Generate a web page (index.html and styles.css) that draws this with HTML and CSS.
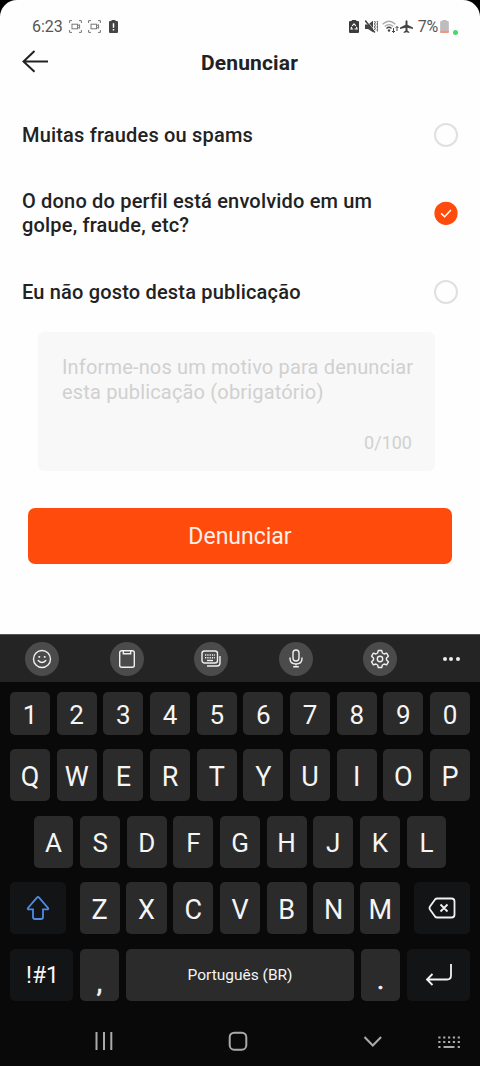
FILE: index.html
```html
<!DOCTYPE html>
<html lang="pt-BR">
<head>
<meta charset="utf-8">
<title>Denunciar</title>
<link rel="stylesheet" href="styles.css">
</head>
<body>
<div class="phone">
  <main class="sheet">
    <div class="status">
      <div class="status-left">
        <span class="clock">6:23</span>
        <svg class="cast" width="13" height="13" viewBox="0 0 13 13"><path d="M.6 3V.6H3M10 .6h2.400V3M.6 10v2.400H3M10 12.400h2.400V10"/><rect x="3" y="4.200" width="5.600" height="4.600"/><path d="M8.600 5.700l2-1v3.600l-2-1"/></svg>
        <svg class="cast" width="13" height="13" viewBox="0 0 13 13"><path d="M.6 3V.6H3M10 .6h2.400V3M.6 10v2.400H3M10 12.400h2.400V10"/><rect x="3" y="4.200" width="5.600" height="4.600"/><path d="M8.600 5.700l2-1v3.600l-2-1"/></svg>
        <svg class="alert" width="9" height="13" viewBox="0 0 9 13"><path d="M2.500 0h4v1H8q1 0 1 1v10q0 1-1 1H1q-1 0-1-1V2q0-1 1-1h1.500z" fill="#444"/><path d="M4.500 3.200v4.600M4.500 9v1.600" stroke="#fff" stroke-width="1.500"/></svg>
      </div>
      <div class="status-right">
        <svg width="10" height="13" viewBox="0 0 9 13" preserveAspectRatio="none"><path d="M2.500 0h4v1H8q1 0 1 1v10q0 1-1 1H1q-1 0-1-1V2q0-1 1-1h1.500z" fill="#3c3c3c"/><path d="M2.800 6L4.500 3.800 6.200 6M6.700 6.800l.6 2.200H5M3.700 9H1.800l.6-2.200" fill="none" stroke="#fff" stroke-width="1"/></svg>
        <svg class="mute" width="13" height="13" viewBox="0 0 13 13"><path d="M0 4.500h3L8 .8v11.400L3 9H0z" fill="#444"/><path d="M.3.6l9.500 11.800" stroke="#444" stroke-width="1.600"/><path d="M1.600.4l8.600 10.600" stroke="#fff" stroke-width=".6"/><path d="M9.500 1l.8 1.500-.8 1.500.8 1.500-.8 1.500.8 1.500-.8 1.500M12 1l.8 1.500L12 4l.8 1.500L12 7l.8 1.500L12 10l.8 1.500" fill="none" stroke="#444"/></svg>
        <svg class="wifi" width="17" height="13" viewBox="0 0 17 13" fill="none"><path d="M.6 4.200Q7 -1.600 13.400 4.200M2.700 6.500Q7 2.700 11.300 6.500" stroke="#aaa" stroke-width="1.300"/><path d="M4.500 8.500Q7 6.200 9.500 8.500" stroke="#444" stroke-width="1.400"/><circle cx="7" cy="10.500" r="1.200" fill="#444"/><path d="M11.500 8v4.500M10 11l1.500 1.500L13 11M15 11V6.500M13.500 8L15 6.500 16.500 8" stroke="#444"/></svg>
        <svg class="plane" width="13" height="13" viewBox="0 0 13 13"><path d="M5.500 1.200q1-2 2 0v3.500L13 7.500v1.400L7.500 7.800v2.700L9.300 12v1L6.500 12.300 3.700 13v-1l1.800-1.500V7.800L0 8.900V7.500l5.500-2.800z" fill="#444"/></svg>
        <span class="percent">7%</span>
        <svg class="battery" width="9" height="13" viewBox="0 0 8 12"><path d="M2 0h4v1h1q1 0 1 1v9q0 1-1 1H1q-1 0-1-1V2q0-1 1-1h1z" fill="#bdbdbd"/><path d="M0 10h8v1q0 1-1 1H1q-1 0-1-1z" fill="#f0977d"/></svg>
        <span class="dot"></span>
      </div>
    </div>
    <header class="header">
      <svg class="back" width="27" height="23" viewBox="0 0 27 23"><path d="M12.500 1L1.500 11.500l11 10.300M1.500 11.500H26"/></svg>
      <h1 class="title">Denunciar</h1>
    </header>
    <div class="option option-first"><span>Muitas fraudes ou spams</span><i class="radio"></i></div>
    <div class="option option-second"><span>O dono do perfil está envolvido em um<br>golpe, fraude, etc?</span>
      <svg class="checked" width="24" height="24" viewBox="0 0 24 24"><circle cx="12" cy="12.300" r="11.600" fill="#ff4b0b"/><path d="M7.200 12.400l3.400 3.300 6.300-6.800" fill="none" stroke="#fff" stroke-width="1.500"/></svg></div>
    <div class="option option-third"><span>Eu não gosto desta publicação</span><i class="radio"></i></div>
    <div class="reason">
      <p class="placeholder">Informe-nos um motivo para denunciar<br>esta publicação (obrigatório)</p>
      <span class="count">0/100</span>
    </div>
    <button class="submit">Denunciar</button>
  </main>
  <section class="keyboard">
    <div class="tools">
      <span class="tool"><svg width="20" height="20" viewBox="0 0 20 20"><circle cx="10" cy="10" r="8.500"/><path d="M6.200 11.500q3.800 4 7.600 0" stroke-linecap="round"/><path d="M7.300 7v1.700M12.700 7v1.700" stroke-width="1.700"/></svg></span>
      <span class="tool"><svg width="20" height="20" viewBox="0 0 20 20"><rect x="2.700" y="1.700" width="14.600" height="16.600" rx="2"/><path d="M6.300 2v2.700h7.400V2"/></svg></span>
      <span class="tool"><svg width="20" height="20" viewBox="0 0 20 20"><rect x="1" y="2" width="15.500" height="12" rx="2.500"/><path d="M19 7v7q0 3-3 3H6"/><path d="M4 6h10M4 8.800h10" stroke-dasharray="1.300 1"/><path d="M6 11.500h6"/></svg></span>
      <span class="tool"><svg width="20" height="20" viewBox="0 0 20 20"><rect x="7" y="1" width="6" height="11" rx="3"/><path d="M4 8.500v1q0 5.500 6 5.500t6-5.500v-1M10 15v1.500M7.200 17.700h5.600"/></svg></span>
      <span class="tool"><svg width="20" height="20" viewBox="0 0 20 20"><path d="M8.300 1.500h3.400l.7 2.500 1.700 1 2.500-.8 1.800 3-1.900 1.800v2l1.900 1.800-1.800 3-2.500-.8-1.700 1-.7 2.500H8.300L7.600 16l-1.700-1-2.500.8-1.800-3L3.500 11V9L1.600 7.200l1.800-3 2.500.8 1.700-1z" stroke-linejoin="round"/><circle cx="10" cy="10" r="2.700"/></svg></span>
      <span class="more"><i></i><i></i><i></i></span>
    </div>
    <div class="row numbers"><b>1</b><b>2</b><b>3</b><b>4</b><b>5</b><b>6</b><b>7</b><b>8</b><b>9</b><b>0</b></div>
    <div class="row"><b>Q</b><b>W</b><b>E</b><b>R</b><b>T</b><b>Y</b><b>U</b><b>I</b><b>O</b><b>P</b></div>
    <div class="row home"><b>A</b><b>S</b><b>D</b><b>F</b><b>G</b><b>H</b><b>J</b><b>K</b><b>L</b></div>
    <div class="row lower">
      <b class="dark shift"><svg width="24" height="26" viewBox="0 0 24 26"><path d="M10.900 2.600q1.100-1.200 2.200 0L22 12.900q.8 1.500-.8 1.500H17v7.600q0 2-2 2H9q-2 0-2-2v-7.600H2.800q-1.600 0-.8-1.500z"/></svg></b>
      <b>Z</b><b>X</b><b>C</b><b>V</b><b>B</b><b>N</b><b>M</b>
      <b class="dark erase"><svg width="28" height="22" viewBox="0 0 28 22"><path d="M9 1.500h14.500q3 0 3 3v13q0 3-3 3H9q-1 0-2-1l-5-7q-1-1.500 0-3l5-7q1-1 2-1zM12.500 7.500l7 7M19.500 7.500l-7 7"/></svg></b>
    </div>
    <div class="row bottom">
      <b class="dark symbols">!#1</b><b class="comma">,</b><b class="space">Português (BR)</b><b class="period">.</b>
      <b class="dark enter"><svg width="28" height="24" viewBox="0 0 28 24"><path d="M26 1v11.500q0 4-4 4H2M7.500 11L2 16.500 7.500 22"/></svg></b>
    </div>
    <nav class="nav">
      <svg width="480" height="65" viewBox="0 0 480 65"><path d="M96.500 31v18M104 31v18M111.300 31v18"/><rect x="229.700" y="31.700" width="16.600" height="17" rx="4.500"/><path d="M364.500 36l8.300 8.500 8.300-8.500"/><path d="M438.300 36.500h22M438.300 41h22" stroke-dasharray="2.200 2.650"/><path d="M438.300 46h2.200M443.500 46h11M457.700 46h2.200"/></svg>
    </nav>
  </section>
</div>
</body>
</html>
```

FILE: styles.css
```css
* { box-sizing: border-box; }
body { margin: 0; background: #000; font-family: Roboto, sans-serif; }
.phone { width: 480px; height: 1066px; overflow: hidden; background: #000; }
.sheet { height: 634px; background: #fefefe; border-radius: 17px 17px 0 0; overflow: hidden; color: #222; }
.status { height: 42px; padding: 16px 22px 0 32px; display: flex; justify-content: space-between; color: #555; font-size: 16px; line-height: 21px; }
.status-left, .status-right { display: flex; align-items: center; height: 21px; }
.cast { margin-left: 6px; fill: none; stroke: #777; }
.alert { margin-left: 8px; }
.mute { margin-left: 6px; }
.wifi { margin-left: 4px; }
.plane { margin-left: 1px; }
.percent { margin-left: 5px; letter-spacing: -.2px; }
.battery { margin-left: 2px; }
.dot { width: 5px; height: 5px; margin: 11px 0 0 4px; border-radius: 50%; background: #4bd66e; }
.header { height: 42px; display: grid; grid-template-columns: 42px 1fr 42px; padding: 0 20px 0 22px; }
.back { margin-top: 8px; fill: none; stroke: #222; stroke-width: 2; }
.title { margin: 7px 0 0; text-align: center; font-size: 21px; line-height: 28px; font-weight: 700; color: #222; letter-spacing: .15px; padding-left: 17px; }
.option { display: flex; align-items: center; justify-content: space-between; padding: 0 22px; font-size: 20px; line-height: 24px; font-weight: 500; letter-spacing: .18px; }
.option-first { height: 24px; margin-top: 39px; }
.option-second { height: 48px; margin-top: 42px; }
.option-third { height: 24px; margin-top: 43px; }
.radio { width: 24px; height: 24px; border: 2px solid #e0e0e0; border-radius: 50%; }
.reason { width: 397px; height: 139px; margin: 28px 0 0 38px; padding: 23px 23px 16px 24px; display: flex; flex-direction: column; justify-content: space-between; background: #f8f8f8; border-radius: 6px; color: #d0d0d0; }
.placeholder { margin: 0; font-size: 20px; line-height: 25px; letter-spacing: .17px; white-space: nowrap; }
.count { align-self: flex-end; font-size: 18px; line-height: 24px; }
.submit { display: block; width: 424px; height: 56px; margin: 37px 0 0 28px; border: 0; border-radius: 7px; background: #ff4b0b; color: #fff0e8; font: 23px/56px Roboto, sans-serif; padding: 1px 0 0; }
.keyboard { height: 432px; background: #090909; color: #f5f5f5; }
.tools { height: 48px; padding: 1px 20px 0 25px; border-top: 1px solid #555; background: #242424; display: flex; align-items: center; justify-content: space-between; }
.tool { width: 34px; height: 34px; border-radius: 50%; background: #4b4b4b; display: grid; place-items: center; }
.tool svg { fill: none; stroke: #f0f0f0; stroke-width: 1.4; }
.more { width: 17px; display: flex; gap: 2.500px; margin-left: -5px; }
.more i { width: 4px; height: 4px; border-radius: 50%; background: #eee; }
.row { height: 52px; display: flex; gap: 6.670px; padding: 0 10px; margin-top: 14.400px; }
.row b { flex: 1 1 0; min-width: 0; display: flex; align-items: center; justify-content: center; border-radius: 5px; background: #2b2b2c; font-size: 27px; line-height: 52px; font-weight: 400; padding-top: 3px; }
.numbers { height: 43px; margin-top: 10px; }
.numbers b { line-height: 43px; font-size: 26px; }
.home { padding: 0 33.500px; }
.home b { font-size: 26px; }
.row .dark { background: #131415; padding-top: 0; }
.row .shift { flex: 0 0 56px; margin-right: 7px; }
.row .erase { flex: 0 0 56px; margin-left: 7px; }
.shift svg, .erase svg, .enter svg { fill: none; stroke: #f2f2f2; stroke-width: 1.800; }
.shift svg { stroke: #4f8be6; }
.row .symbols { flex: 0 0 63px; font-size: 23px; padding: 2px 0 0 2px; }
.row .comma, .row .period { flex: 0 0 39.700px; }
.row .comma { padding-top: 17px; -webkit-text-stroke: .5px #f5f5f5; }
.row .period { padding-top: 10px; -webkit-text-stroke: .7px #f5f5f5; }
.row .space { font-size: 15.500px; padding-top: 1px; }
.row .enter { flex: 0 0 63px; }
.nav { height: 65px; }
.nav svg { display: block; fill: none; stroke: #aaa; stroke-width: 2; }
```
